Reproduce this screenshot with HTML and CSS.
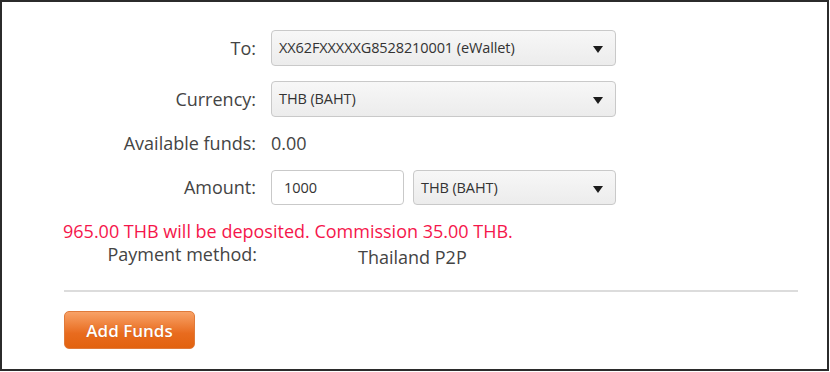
FILE: index.html
```html
<!DOCTYPE html>
<html lang="en">
<head>
    <meta charset="UTF-8">
    <title>Add Funds</title>
    <link rel="stylesheet" href="styles.css">
</head>
<body>
    <div class="frame">
        <div class="form">
            <div class="row">
                <label class="label">To:</label>
                <div class="select wide">XX62FXXXXXG8528210001 (eWallet)</div>
            </div>
            <div class="row">
                <label class="label">Currency:</label>
                <div class="select wide">THB (BAHT)</div>
            </div>
            <div class="row short">
                <label class="label">Available funds:</label>
                <div class="value">0.00</div>
            </div>
            <div class="row">
                <label class="label">Amount:</label>
                <div class="amount">
                    <input type="text" class="input" value="1000">
                    <div class="select narrow">THB (BAHT)</div>
                </div>
            </div>
        </div>
        <p class="notice">965.00 THB will be deposited. Commission 35.00 THB.</p>
        <div class="method">
            <span class="label">Payment method:</span>
            <span class="method-name">Thailand P2P</span>
        </div>
        <hr class="divider">
        <button class="btn">Add Funds</button>
    </div>
</body>
</html>
```

FILE: styles.css
```css
body {
    margin: 0;
    font-family: "Open Sans", "Noto Sans", sans-serif;
    color: #3a3a3a;
}
.frame {
    box-sizing: border-box;
    width: 829px;
    height: 371px;
    border: 2px solid #2b2b2b;
    background: #fff;
    padding-top: 28px;
}
.form {
    display: flex;
    flex-direction: column;
    gap: 15px;
}
.row {
    display: grid;
    grid-template-columns: 254px 345px;
    column-gap: 15px;
    align-items: center;
    height: 36px;
}
.row.short {
    height: 22px;
}
.label {
    text-align: right;
    font-size: 18px;
    line-height: 22px;
    color: #444;
}
.value {
    font-size: 18px;
    line-height: 22px;
    color: #444;
}
.select {
    position: relative;
    box-sizing: border-box;
    height: 36px;
    padding: 0 30px 0 7px;
    border: 1px solid #c9c9c9;
    border-radius: 4px;
    background: linear-gradient(#f7f7f7, #ececec);
    font-size: 14.5px;
    line-height: 34px;
    color: #333;
    letter-spacing: -0.1px;
}
.select::after {
    content: "";
    position: absolute;
    right: 12px;
    top: 15px;
    border-left: 5px solid transparent;
    border-right: 5px solid transparent;
    border-top: 7px solid #1c1c1c;
}
.narrow {
    height: 35px;
    line-height: 33px;
}
.amount {
    display: grid;
    grid-template-columns: 133px 203px;
    column-gap: 9px;
}
.input {
    box-sizing: border-box;
    height: 35px;
    margin: 0;
    padding: 0 12px;
    border: 1px solid #c9c9c9;
    border-radius: 4px;
    font-family: inherit;
    font-size: 14.5px;
    color: #333;
}
.notice {
    margin: 15px 0 0 61px;
    font-size: 18px;
    line-height: 22px;
    color: #f5164b;
}
.method {
    display: grid;
    grid-template-columns: 255px auto;
    margin-top: 1px;
}
.method-name {
    padding-left: 101px;
    padding-top: 3px;
    font-size: 18px;
    line-height: 22px;
    color: #444;
}
.divider {
    margin: 22px 29px 0 62px;
    border: 0;
    border-top: 2px solid #dcdcdc;
}
.btn {
    display: block;
    box-sizing: border-box;
    width: 131px;
    height: 38px;
    margin: 19px 0 0 62px;
    border: 1px solid #e07a3a;
    border-radius: 5px;
    background: linear-gradient(#f8a267, #e86b1e 60%, #e2620f);
    font-family: inherit;
    font-size: 17px;
    font-weight: 600;
    color: #fff;
    text-shadow: 0 0 1px rgba(150, 60, 0, 0.4);
}
```
